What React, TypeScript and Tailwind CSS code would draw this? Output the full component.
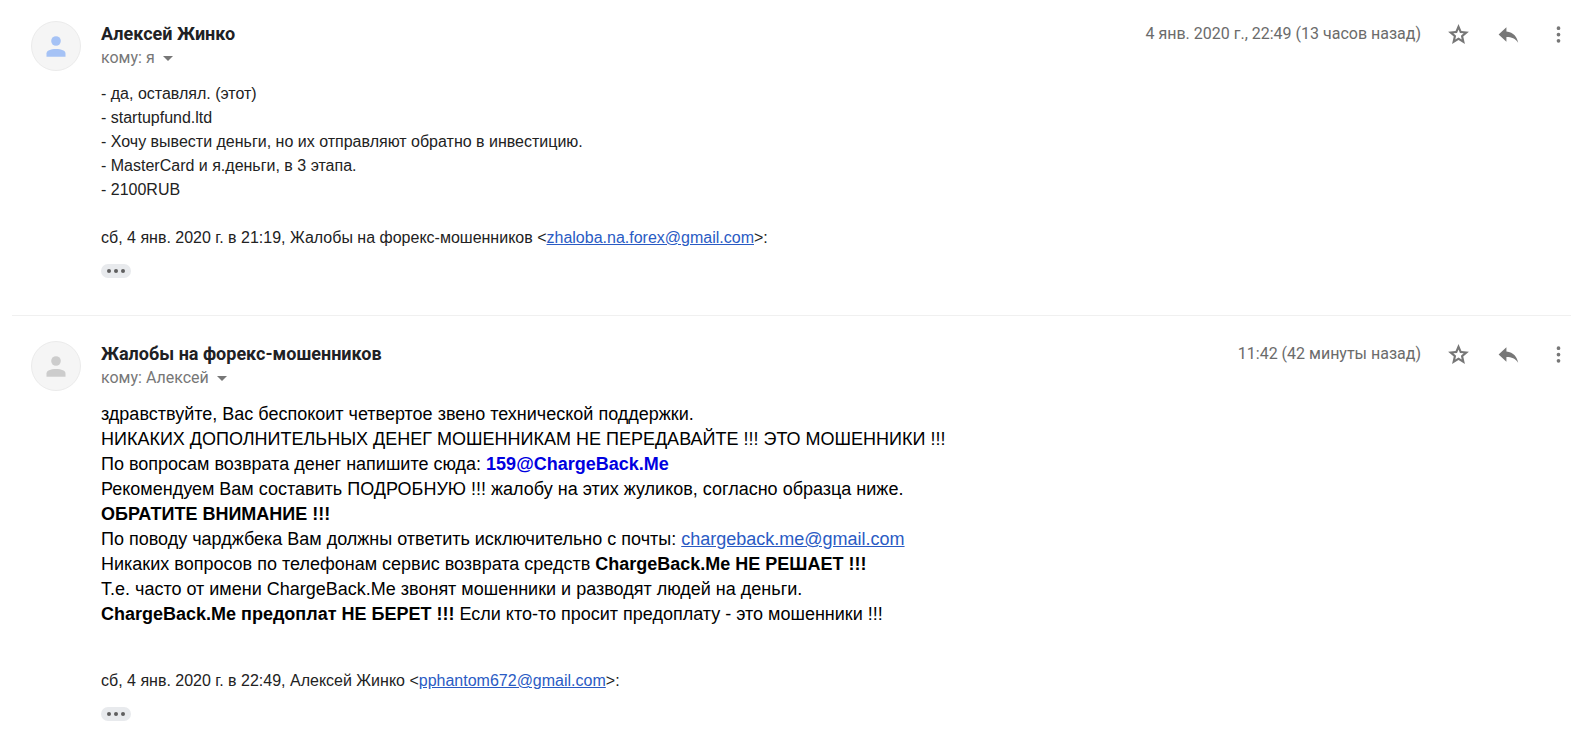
import type { ReactNode } from "react"

type MessageProps = {
  sender: string
  recipient: string
  date: string
  avatarClass: string
  quote: string
  quoteEmail: string
  children: ReactNode
}

function IconButton({ label, path }: { label: string; path: string }) {
  return (
    <button type="button" aria-label={label} className="flex h-6 w-[50px] items-center justify-center text-[#777]">
      <svg viewBox="0 0 24 24" fill="currentColor" className="size-[25px]">
        <path d={path} />
      </svg>
    </button>
  )
}

function Avatar({ className }: { className: string }) {
  return (
    <div className="flex size-[50px] shrink-0 items-center justify-center rounded-full border border-[#ebebeb] bg-[#f5f5f5]">
      <svg viewBox="0 0 24 24" fill="currentColor" className={`size-6 ${className}`}>
        <circle cx="12" cy="7" r="4.8" />
        <path d="M2.5 22.700v-3.200c0-2.800 4-4.500 9.500-4.500s9.500 1.700 9.500 4.500v3.200z" />
      </svg>
    </div>
  )
}

function Message({ sender, recipient, date, avatarClass, quote, quoteEmail, children }: MessageProps) {
  return (
    <article className="flex gap-5 pr-1.5 pl-[31px]">
      <Avatar className={avatarClass} />
      <div className="min-w-0 flex-1">
        <header className="flex items-start justify-between pt-px font-['Roboto',sans-serif]">
          <div>
            <h2 className="text-lg leading-6 font-bold text-[#202124]">{sender}</h2>
            <button type="button" className="flex h-6 items-center gap-2 text-base text-[#777]">
              кому: {recipient}
              <svg viewBox="0 0 10 5" fill="currentColor" className="h-[5px] w-2.5">
                <path d="M0 0h10L5 5z" />
              </svg>
            </button>
          </div>
          <div className="flex items-center">
            <time className="mr-3 text-base leading-6 text-[#6b6b6b]">{date}</time>
            <IconButton
              label="Пометить"
              path="M22 9.240l-7.190-.62L12 2 9.190 8.630 2 9.240l5.460 4.730L5.820 21 12 17.270 18.180 21l-1.630-7.030L22 9.240zM12 14.800l-3.100 1.900.8-3.500-2.700-2.400 3.600-.3L12 7.200l1.400 3.300 3.600.3-2.700 2.400.8 3.500L12 14.800z"
            />
            <IconButton label="Ответить" path="M10 9V5l-7.500 7 7.500 7v-4.500c5 0 8.500 1.600 11.300 5.300-1-5.200-4.300-10.200-11.300-10.800z" />
            <IconButton
              label="Ещё"
              path="M12 7.700a1.800 1.800 0 1 0 0-3.600 1.800 1.800 0 0 0 0 3.600zm0 6.100a1.800 1.800 0 1 0 0-3.600 1.800 1.800 0 0 0 0 3.600zm0 6.100a1.800 1.800 0 1 0 0-3.600 1.800 1.800 0 0 0 0 3.600z"
            />
          </div>
        </header>
        <div className="mt-3 text-[#222]">
          {children}
          <p className="text-base">
            {quote} &lt;
            <MailLink email={quoteEmail} />
            &gt;:
          </p>
          <button
            type="button"
            aria-label="Показать скрытый текст"
            className="mt-3.5 flex h-3.5 w-[30px] items-center justify-center gap-[3px] rounded-full bg-[#e8eaed]"
          >
            <span className="size-1 rounded-full bg-[#5f5f5f]" />
            <span className="size-1 rounded-full bg-[#5f5f5f]" />
            <span className="size-1 rounded-full bg-[#5f5f5f]" />
          </button>
        </div>
      </div>
    </article>
  )
}

function MailLink({ email }: { email: string }) {
  return (
    <a href={`mailto:${email}`} className="text-[#2a5bc4] underline">
      {email}
    </a>
  )
}

export default function App() {
  return (
    <main className="bg-white pt-[21px] font-['Liberation_Sans',Arial,sans-serif]">
      <Message
        sender="Алексей Жинко"
        recipient="я"
        date="4 янв. 2020 г., 22:49 (13 часов назад)"
        avatarClass="text-[#a5c2f5]"
        quote="сб, 4 янв. 2020 г. в 21:19, Жалобы на форекс-мошенников"
        quoteEmail="zhaloba.na.forex@gmail.com"
      >
        <div className="mb-6 text-base">
          <p>- да, оставлял. (этот)</p>
          <p>- startupfund.ltd</p>
          <p>- Хочу вывести деньги, но их отправляют обратно в инвестицию.</p>
          <p>- MasterCard и я.деньги, в 3 этапа.</p>
          <p>- 2100RUB</p>
        </div>
      </Message>

      <hr className="mt-[37px] mr-[18px] mb-[25px] ml-3 border-[#f0f0f0]" />

      <Message
        sender="Жалобы на форекс-мошенников"
        recipient="Алексей"
        date="11:42 (42 минуты назад)"
        avatarClass="text-[#ccc]"
        quote="сб, 4 янв. 2020 г. в 22:49, Алексей Жинко"
        quoteEmail="pphantom672@gmail.com"
      >
        <div className="mb-[42px] text-lg leading-[25px] text-black">
          <p>здравствуйте, Вас беспокоит четвертое звено технической поддержки.</p>
          <p>НИКАКИХ ДОПОЛНИТЕЛЬНЫХ ДЕНЕГ МОШЕННИКАМ НЕ ПЕРЕДАВАЙТЕ !!! ЭТО МОШЕННИКИ !!!</p>
          <p>
            По вопросам возврата денег напишите сюда: <b className="text-[#0000e0]">159@ChargeBack.Me</b>
          </p>
          <p>Рекомендуем Вам составить ПОДРОБНУЮ !!! жалобу на этих жуликов, согласно образца ниже.</p>
          <p>
            <b>ОБРАТИТЕ ВНИМАНИЕ !!!</b>
          </p>
          <p>
            По поводу чарджбека Вам должны ответить исключительно с почты: <MailLink email="chargeback.me@gmail.com" />
          </p>
          <p>
            Никаких вопросов по телефонам сервис возврата средств <b>ChargeBack.Me НЕ РЕШАЕТ !!!</b>
          </p>
          <p>Т.е. часто от имени ChargeBack.Me звонят мошенники и разводят людей на деньги.</p>
          <p>
            <b>ChargeBack.Me предоплат НЕ БЕРЕТ !!!</b> Если кто-то просит предоплату - это мошенники !!!
          </p>
        </div>
      </Message>
    </main>
  )
}
